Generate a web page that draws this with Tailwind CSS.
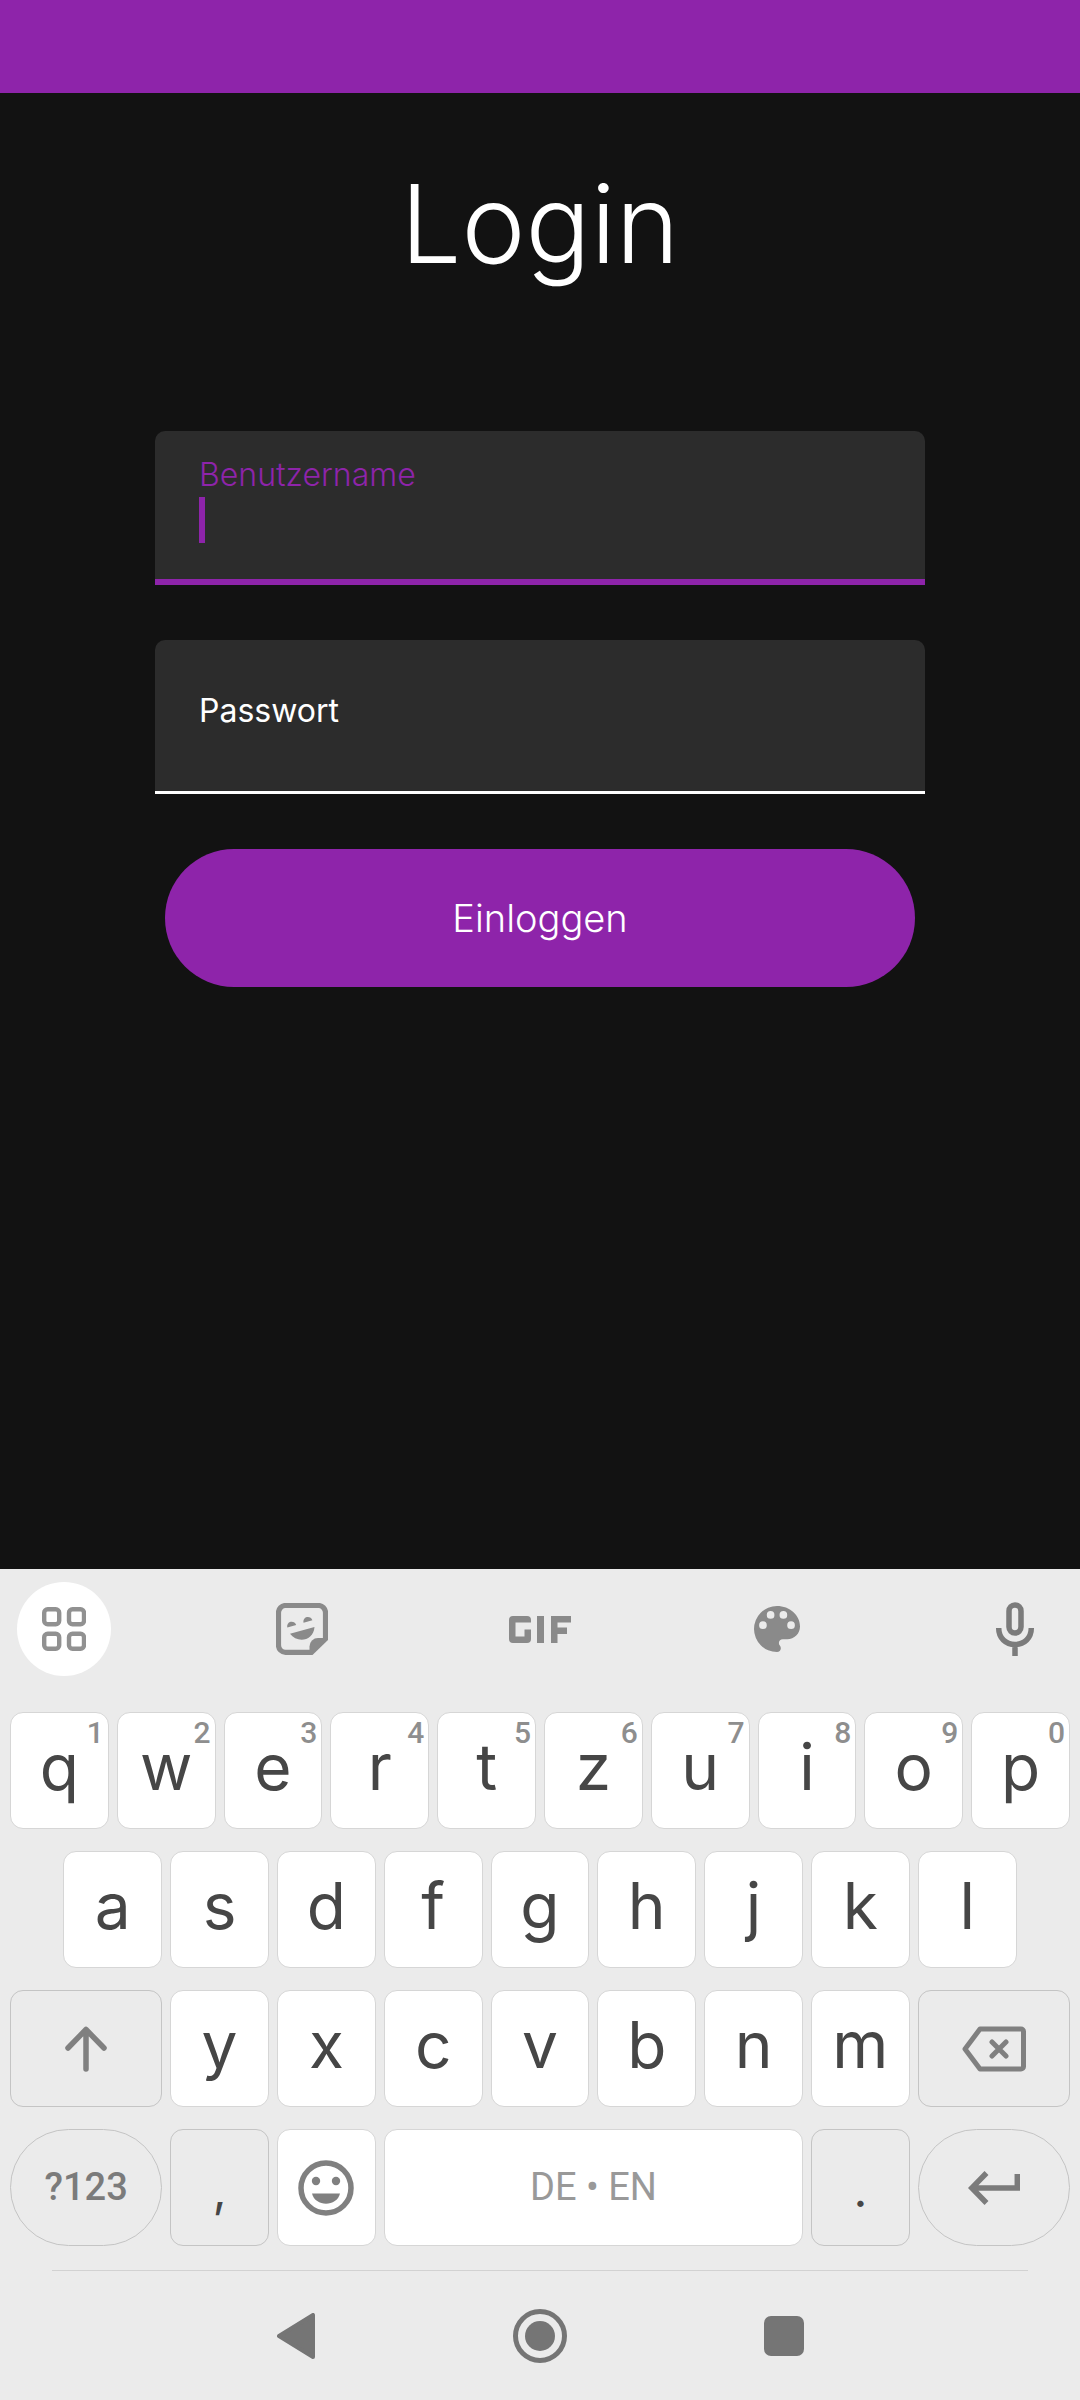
<!DOCTYPE html>
<html lang="de">
<head>
<meta charset="utf-8">
<meta name="viewport" content="width=device-width, initial-scale=1">
<title>Login</title>
<script src="https://cdn.jsdelivr.net/npm/@tailwindcss/browser@4"></script>
</head>
<body class="flex min-h-screen flex-col bg-[#121212] font-['Inter',sans-serif]">
<header class="h-[93px] bg-[#8e24aa]"></header>

<main class="flex-1 px-6 pt-[67px] text-white">
  <h1 class="text-center text-[108px] leading-[128px] font-light">Login</h1>
  <form class="mx-auto mt-[143px] flex max-w-[770px] flex-col gap-[55px]">
    <div class="h-[154px] rounded-t-[10px] border-b-[6px] border-[#8e24aa] bg-[#2c2c2c] px-11 pt-6">
      <label for="user" class="block text-[32px] leading-10 font-light text-[#8e24aa]">Benutzername</label>
      <div class="mt-[2px] flex items-center">
        <span class="h-[46px] w-[6px] bg-[#8e24aa]"></span>
        <input id="user" type="text" class="h-[46px] min-w-0 flex-1 bg-transparent text-[32px] caret-[#8e24aa] outline-none">
      </div>
    </div>
    <div class="relative h-[154px] rounded-t-[10px] border-b-[3px] border-white bg-[#2c2c2c]">
      <label for="password" class="absolute top-[51px] left-11 text-[32px] leading-10">Passwort</label>
      <input id="password" type="password" class="h-full w-full bg-transparent px-11 text-[32px] outline-none">
    </div>
    <button type="submit" class="mx-[10px] h-[138px] rounded-full bg-[#8e24aa] text-[38px] font-light">Einloggen</button>
  </form>
</main>

<section aria-label="Tastatur" class="bg-[#ebebeb] text-[#464646]">
  <div class="flex justify-between pt-[13px] pr-[18px] pl-[17px] text-[#8a8a8a]">
    <button aria-label="Funktionen" class="flex size-[94px] items-center justify-center rounded-full bg-white">
      <svg class="size-11" viewBox="0 0 44 44" fill="none" stroke="#919191" stroke-width="4.4"><rect x="2.2" y="2.2" width="15" height="15" rx="3.5"/><rect x="27" y="2.2" width="15" height="15" rx="3.5"/><rect x="2.2" y="26.8" width="15" height="15" rx="3.5"/><rect x="27" y="26.8" width="15" height="15" rx="3.5"/></svg>
    </button>
    <button aria-label="Sticker" class="flex size-[94px] items-center justify-center">
      <svg class="size-[52px]" viewBox="0 0 52 52" fill="currentColor"><path d="M35 49.3H9.500a7 7 0 0 1-7-7V9.500a7 7 0 0 1 7-7h33a7 7 0 0 1 7 7V36" fill="none" stroke="currentColor" stroke-width="5.200"/><path d="M52 37L36.500 52H33.500V43.500a8.500 8.500 0 0 1 8.500-8.500H52Z"/><path d="M11.300 24.500a4.600 4.600 0 1 1 8.900-2.400ZM27.500 19.700a4.600 4.600 0 1 1 8.900-2.400ZM14 30.800L38.500 24C37.500 38.500 21 40.500 14 30.800Z"/></svg>
    </button>
    <button aria-label="GIF" class="flex size-[94px] items-center justify-center">
      <svg class="h-[27px] w-[62px]" viewBox="0 0 62 27" fill="currentColor"><path d="M22 6.500V4a4 4 0 0 0-4-4H4a4 4 0 0 0-4 4v19a4 4 0 0 0 4 4h14a4 4 0 0 0 4-4V13.500H15.500V20.500H6.500V6.500ZM28 0h7v27h-7ZM42 0h20v6.500H48.500V11.500H58v6.500H48.500V27H42Z"/></svg>
    </button>
    <button aria-label="Design" class="flex size-[94px] items-center justify-center">
      <svg class="size-[46px]" viewBox="3 3 18 18" fill="currentColor"><path d="M12 3a9 9 0 0 0 0 18c.83 0 1.500-.67 1.500-1.500 0-.39-.15-.74-.39-1.010-.23-.26-.38-.61-.38-.99 0-.83.67-1.500 1.500-1.500H16c2.760 0 5-2.240 5-5 0-4.420-4.030-8-9-8zm-5.500 9a1.500 1.500 0 1 1 0-3 1.500 1.500 0 0 1 0 3zm3-4a1.500 1.500 0 1 1 0-3 1.500 1.500 0 0 1 0 3zm5 0a1.500 1.500 0 1 1 0-3 1.500 1.500 0 0 1 0 3zm3 4a1.500 1.500 0 1 1 0-3 1.500 1.500 0 0 1 0 3z"/></svg>
    </button>
    <button aria-label="Spracheingabe" class="flex size-[94px] items-center justify-center text-[#7b7b7b]">
      <svg class="h-[54px] w-[40px]" viewBox="0 0 40 54" fill="none" stroke="currentColor" stroke-width="5.500"><rect x="14" y="3" width="12" height="28" rx="6"/><path d="M3.700 26c0 10 7 16.500 16.300 16.500S36.300 36 36.300 26M20 42v12"/></svg>
    </button>
  </div>

  <div id="keys" class="mt-9 grid grid-cols-20 gap-x-2 gap-y-[22px] px-[10px]"></div>

  <hr class="mx-[52px] mt-6 border-[#d2d2d2]">
  <nav aria-label="System" class="flex h-[129px] items-center justify-center gap-[194px] text-[#757575]">
    <button aria-label="Zurück" class="flex w-[46px] justify-center"><svg class="h-[46px] w-[38px]" viewBox="0 0 38 46" fill="currentColor" stroke="currentColor" stroke-width="4" stroke-linejoin="round"><path d="M2 23L36 2V44Z"/></svg></button>
    <button aria-label="Startseite"><svg class="size-[54px]" viewBox="0 0 54 54"><circle cx="27" cy="27" r="24.500" fill="none" stroke="currentColor" stroke-width="5"/><circle cx="27" cy="27" r="15" fill="currentColor"/></svg></button>
    <button aria-label="Übersicht" class="flex w-[46px] justify-center"><span class="size-10 rounded-[7px] bg-[#757575]"></span></button>
  </nav>
</section>

<script>
  const keys = document.getElementById('keys');
  const base = 'relative flex h-[117px] items-center justify-center border ';
  const light = 'rounded-[13px] border-[#d6d6d6] bg-white ';
  const dark = 'rounded-[13px] border-[#c4c4c4] ';
  const pill = 'rounded-full border-[#c4c4c4] ';
  const letter = 'text-[64px] leading-none pb-2 ';

  function addKey(content, classes, label) {
    const key = document.createElement('button');
    key.type = 'button';
    key.className = base + classes;
    key.innerHTML = content;
    if (label) key.setAttribute('aria-label', label);
    keys.appendChild(key);
  }

  const hint = n => `<span class="absolute top-[5px] right-1 font-['Roboto',sans-serif] text-[30px] leading-none font-medium text-[#8e8e8e]">${n}</span>`;

  [...'qwertzuiop'].forEach((c, i) => addKey(c + hint((i + 1) % 10), light + letter + 'col-span-2'));
  [...'asdfghjkl'].forEach((c, i) => addKey(c, light + letter + (i ? 'col-span-2' : 'col-span-2 col-start-2')));

  addKey('<svg class="h-[46px] w-[42px]" viewBox="0 0 42 46" fill="none" stroke="#808080" stroke-width="5.500" stroke-linecap="round" stroke-linejoin="round"><path d="M21 3.500V43M3 22L21 3.500L39 22"/></svg>', dark + 'col-span-3 col-start-1', 'Umschalten');
  [...'yxcvbnm'].forEach(c => addKey(c, light + letter + 'col-span-2'));
  addKey('<svg class="h-[46px] w-[64px]" viewBox="0 0 64 46" fill="none" stroke="#808080" stroke-width="5" stroke-linecap="round" stroke-linejoin="round"><path d="M18 3H59a2.500 2.500 0 0 1 2.500 2.500V40.500a2.500 2.500 0 0 1-2.500 2.500H18L3 23ZM30 16L44 30M44 16L30 30"/></svg>', dark + 'col-span-3', 'Löschen');

  addKey('?123', pill + "col-span-3 font-['Roboto',sans-serif] text-[38px] font-medium text-[#7b7b7b]");
  addKey(',', dark + 'col-span-2 pt-1 text-[48px] leading-none');
  addKey('<svg class="size-14" viewBox="0 0 56 56" fill="#808080"><circle cx="28" cy="28" r="25" fill="none" stroke="#808080" stroke-width="5.500"/><circle cx="18" cy="21" r="4.200"/><circle cx="38" cy="21" r="4.200"/><path d="M14 33.500H42C39 47 17 47 14 33.500Z"/></svg>', light + 'col-span-2', 'Emoji');
  addKey('DE • EN', light + "col-span-8 font-['Roboto',sans-serif] text-[38px] text-[#999999]", 'Leertaste DE • EN');
  addKey('.', dark + 'col-span-2 pt-1 text-[48px] leading-none');
  addKey('<svg class="h-[34px] w-[52px]" viewBox="0 0 52 34" fill="none" stroke="#7b7b7b" stroke-width="5.500"><path d="M49.300 3V17H4M18.500 2L3.800 17L18.500 32"/></svg>', pill + 'col-span-3', 'Eingabe');
</script>
</body>
</html>
